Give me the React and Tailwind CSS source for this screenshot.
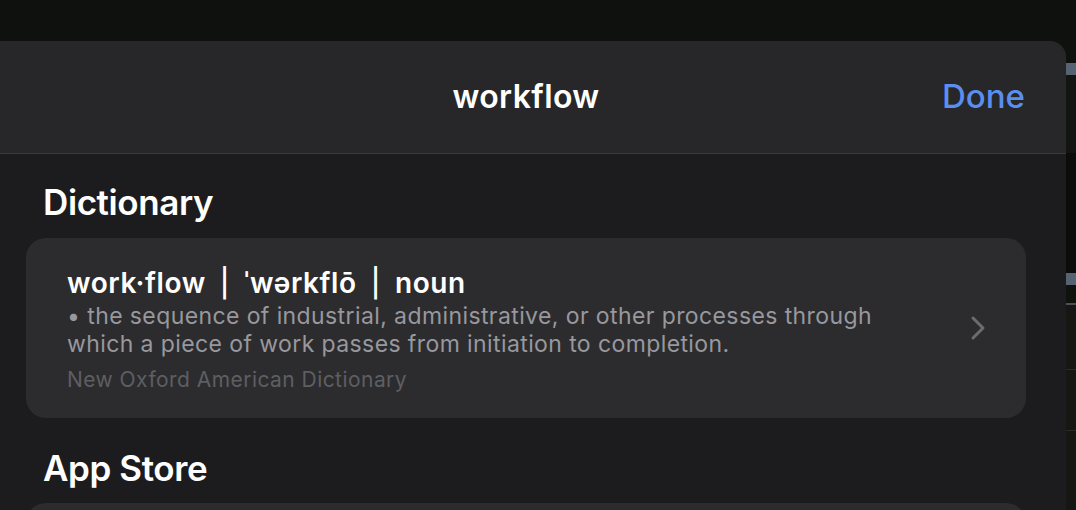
import React from "react";

const font = { fontFamily: "Inter, 'Noto Sans', sans-serif" };

function Chevron() {
  return (
    <svg width="16" height="26" viewBox="0 0 16 26" fill="none">
      <polyline
        points="3,3 13,13 3,23"
        stroke="#6b6b70"
        strokeWidth="3"
        strokeLinecap="round"
        strokeLinejoin="round"
      />
    </svg>
  );
}

export default function App() {
  return (
    <div
      className="w-[1076px] h-[510px] bg-[#0f110e] overflow-hidden flex pt-[41px]"
      style={font}
    >
      {/* Sheet */}
      <div className="w-[1066px] shrink-0 flex flex-col rounded-tr-[16px] overflow-hidden bg-[#1c1c1e]">
        <div className="h-[113px] shrink-0 bg-[#272729] border-b border-[#3b3b3d] grid grid-cols-[minmax(0,1fr)_auto_minmax(0,1fr)] items-center pr-[14px]">
          <div />
          <h1 className="text-[32px] font-semibold text-white tracking-[0.4px]">
            workflow
          </h1>
          <div className="flex justify-end pr-[27px]">
            <button className="text-[33px] font-medium text-[#5a8ff0]">
              Done
            </button>
          </div>
        </div>

        <div className="pt-[28px] pl-[26px]">
          <h2 className="pl-[17px] text-[35px] font-semibold text-white tracking-[-0.4px] leading-[40px]">
            Dictionary
          </h2>
          <div className="mt-[16px] w-[1000px] h-[180px] rounded-[20px] bg-[#2c2c2e] flex items-center pl-[41px] pr-[40px]">
            <div className="flex-1 pt-[2px]">
              <div className="text-[28px] font-semibold text-white leading-[32px] tracking-[0.6px] flex items-center">
                <span>work·flow</span>
                <span className="mx-[14px] font-medium">|</span>
                <span>ˈwərkflō</span>
                <span className="mx-[14px] font-medium">|</span>
                <span>noun</span>
              </div>
              <p className="text-[23px] leading-[28px] text-[#98989e] tracking-[0.4px] mt-[3px]">
                • the sequence of industrial, administrative, or other processes through
                <br />
                which a piece of work passes from initiation to completion.
              </p>
              <div className="text-[21px] leading-[24px] text-[#5e5e63] tracking-[0.45px] mt-[10px]">
                New Oxford American Dictionary
              </div>
            </div>
            <Chevron />
          </div>

          <h2 className="mt-[30px] pl-[17px] text-[35px] font-semibold text-white tracking-[-0.4px] leading-[40px]">
            App Store
          </h2>
          <div className="mt-[15px] w-[1000px] h-[120px] rounded-[20px] bg-[#2c2c2e]" />
        </div>
      </div>

      {/* Right edge of background window */}
      <div className="flex-1 flex flex-col">
        <div className="h-[22px] bg-[#0f110e]" />
        <div className="h-[12px] bg-[#566370]" />
        <div className="h-[78px] bg-[#121511]" />
        <div className="h-[120px] bg-[#0c0d0a]" />
        <div className="h-[12px] bg-[#566370]" />
        <div className="h-[18px] bg-[#10120e]" />
        <div className="h-[2px] bg-[#4a5058]" />
        <div className="h-[64px] bg-[#161713]" />
        <div className="h-[1px] bg-[#2a2a28]" />
        <div className="h-[60px] bg-[#161713]" />
        <div className="h-[1px] bg-[#2a2a28]" />
        <div className="flex-1 bg-[#161713]" />
      </div>
    </div>
  );
}
